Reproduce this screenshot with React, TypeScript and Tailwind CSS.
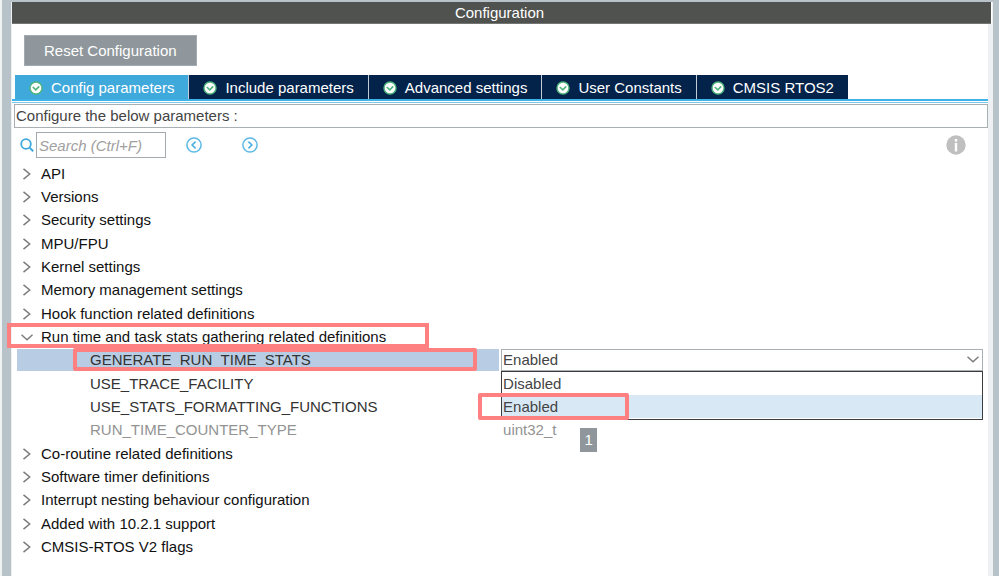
import React, { FC, useState } from "react"

import clsx from "clsx"

type TreeRow = {
    label: string
    value?: string
    child?: boolean
    readOnly?: boolean
    expanded?: boolean
}

const TABS = ["Config parameters", "Include parameters", "Advanced settings", "User Constants", "CMSIS RTOS2"]

const OPTIONS = ["Disabled", "Enabled"]

const ROWS: TreeRow[] = [
    { label: "API" },
    { label: "Versions" },
    { label: "Security settings" },
    { label: "MPU/FPU" },
    { label: "Kernel settings" },
    { label: "Memory management settings" },
    { label: "Hook function related definitions" },
    { label: "Run time and task stats gathering related definitions", expanded: true },
    { label: "GENERATE_RUN_TIME_STATS", child: true },
    { label: "USE_TRACE_FACILITY", child: true },
    { label: "USE_STATS_FORMATTING_FUNCTIONS", child: true },
    { label: "RUN_TIME_COUNTER_TYPE", child: true, readOnly: true, value: "uint32_t" },
    { label: "Co-routine related definitions" },
    { label: "Software timer definitions" },
    { label: "Interrupt nesting behaviour configuration" },
    { label: "Added with 10.2.1 support" },
    { label: "CMSIS-RTOS V2 flags" },
]

const CheckIcon: FC = () => (
    <svg viewBox="0 0 14 14" className="size-3.5 shrink-0" aria-hidden="true">
        <circle cx="7" cy="7" r="6" fill="#fff" stroke="#4fb57c" strokeWidth="1.4" />
        <path d="M3.8 6 6.8 8.8 10.2 5.4" fill="none" stroke="#4fb57c" strokeWidth="1.6" />
    </svg>
)

const CircleArrow: FC<{ path: string }> = ({ path }) => (
    <svg viewBox="0 0 16 16" className="size-4" fill="none" aria-hidden="true">
        <circle cx="8" cy="8" r="7.1" stroke="#5cb9e4" strokeWidth="1.5" />
        <path d={path} stroke="#4fb3e2" strokeWidth="1.7" />
    </svg>
)

const Chevron: FC<{ down?: boolean }> = ({ down }) => (
    <svg viewBox="0 0 12 12" className="size-3 shrink-0" fill="none" stroke="#7d7d7d" strokeWidth="1.5">
        <path d={down ? "M0.5 3.8 6 8.8 11.5 3.8" : "M2.5 0.9 8.7 6 2.5 11.1"} />
    </svg>
)

const StatsSelect: FC = () => {
    const [value, setValue] = useState("Enabled")
    return (
        <div className="relative w-full">
            <select
                aria-label="GENERATE_RUN_TIME_STATS"
                value={value}
                onChange={(e) => setValue(e.target.value)}
                className="block h-[22px] w-full appearance-none border border-[#a9b0b4] bg-white px-px text-[#444]"
            >
                {OPTIONS.map((option) => (
                    <option key={option}>{option}</option>
                ))}
            </select>
            <span className="pointer-events-none absolute top-1 right-1">
                <Chevron down />
            </span>
            <ul
                role="listbox"
                aria-label="Values"
                className="absolute top-full left-0 z-10 w-full border border-[#3c3c40] bg-white pb-px"
            >
                {OPTIONS.map((option) => (
                    <li
                        key={option}
                        role="option"
                        aria-selected={option === value}
                        onClick={() => setValue(option)}
                        className={clsx(
                            "relative flex h-[23px] items-center px-px text-[#444]",
                            option === value && "bg-[#d8e8f5]"
                        )}
                    >
                        {option}
                        {option === "Enabled" && (
                            <span className="pointer-events-none absolute -inset-y-0.5 -left-6 w-[151px] rounded-xs border-4 border-[#ff8080]" />
                        )}
                    </li>
                ))}
            </ul>
        </div>
    )
}

const ParameterRow: FC<{ row: TreeRow }> = ({ row }) => {
    const selected = row.label === "GENERATE_RUN_TIME_STATS"
    return (
        <li className="flex h-[23px] items-center nth-[3n]:h-6">
            <div
                className={clsx(
                    "relative mr-0.5 flex h-[22px] w-1/2 items-center pl-[73px]",
                    row.readOnly ? "text-[#939393]" : "text-[#333]",
                    selected && "bg-[#b8cde4]"
                )}
            >
                {row.label}
                {selected && (
                    <span className="pointer-events-none absolute -top-px right-[22px] bottom-0 left-14 rounded-xs border-4 border-[#ff8080]" />
                )}
            </div>
            <div className="relative w-1/2 text-[#939393]">
                {selected ? <StatsSelect /> : <span className="pl-0.5">{row.value}</span>}
                {row.readOnly && (
                    <span className="absolute top-2 left-[79px] flex h-6 w-[17px] items-center justify-center bg-[#8f979c] text-white">
                        1
                    </span>
                )}
            </div>
        </li>
    )
}

const GroupRow: FC<{ row: TreeRow }> = ({ row }) => (
    <li className="flex h-[23px] items-center nth-[3n]:h-6">
        <button type="button" aria-expanded={!!row.expanded} className="relative flex items-center gap-2 pl-1">
            <Chevron down={row.expanded} />
            {row.label}
            {row.expanded && (
                <span className="pointer-events-none absolute -top-1 -right-[43px] -bottom-px -left-2.5 border-4 border-[#ff8080]" />
            )}
        </button>
    </li>
)

export default function App() {
    const [activeTab, setActiveTab] = useState(TABS[0])
    return (
        <div className="flex min-h-screen border-l-2 border-[#f0f2f4] bg-[#b8c3c9] pt-0.5 pr-1.5 pl-[9px] font-['Liberation_Sans',Arial,sans-serif] text-[15px] leading-5 text-[#111]">
            <main className="flex grow flex-col border-x border-[#eef1f3] bg-white">
                <h1 className="mr-px border-b border-[#747674] bg-[#50524f] pt-px pr-1 text-center text-white">
                    Configuration
                </h1>
                <div className="flex grow flex-col border-r-4 border-[#eef0f3]">
                    <div className="px-3 pt-[11px] pb-[9px]">
                        <button
                            type="button"
                            className="h-[31px] border border-[#a3abb0] bg-[#8f979c] px-[19px] pt-px text-white"
                        >
                            Reset Configuration
                        </button>
                    </div>
                    <div role="tablist" className="flex border-b-2 border-[#3fb2e8] pl-[3px]">
                        {TABS.map((tab) => (
                            <button
                                key={tab}
                                type="button"
                                role="tab"
                                aria-selected={tab === activeTab}
                                onClick={() => setActiveTab(tab)}
                                className={clsx(
                                    "flex h-6 items-center gap-2 border-r border-[#c3ccd6] pt-px pr-3.5 pl-3.5 text-white last:border-r-0",
                                    tab === activeTab ? "bg-[#3fa9dc]" : "bg-[#03234b]"
                                )}
                            >
                                <CheckIcon />
                                {tab}
                            </button>
                        ))}
                    </div>
                    <div className="mt-px h-px bg-[#7cc8ec]" />
                    <p className="mt-px ml-0.5 border border-[#a9b0b4] px-px py-px text-[#444]">
                        Configure the below parameters :
                    </p>
                    <div className="flex items-center pt-1 pr-[22px] pl-2">
                        <svg viewBox="0 0 14 14" className="mr-0.5 size-3.5" fill="none" stroke="#3fa9dc" aria-hidden="true">
                            <circle cx="6" cy="6" r="4.8" strokeWidth="1.8" />
                            <path d="m9.6 9.6 3.6 3.6" strokeWidth="2" />
                        </svg>
                        <input
                            type="search"
                            aria-label="Search"
                            placeholder="Search (Ctrl+F)"
                            className="h-[26px] w-[130px] border border-[#a3abb0] px-0.5 placeholder:text-[#a0a0a0] placeholder:italic"
                        />
                        <button type="button" aria-label="Previous" className="ml-5">
                            <CircleArrow path="M9.6 4.7 6.2 8l3.4 3.3" />
                        </button>
                        <button type="button" aria-label="Next" className="ml-10">
                            <CircleArrow path="M6.4 4.7 9.8 8l-3.4 3.3" />
                        </button>
                        <button type="button" aria-label="Information" className="ml-auto">
                            <svg viewBox="0 0 20 20" className="size-5" aria-hidden="true">
                                <circle cx="10" cy="10" r="9.7" fill="#bfbfbf" />
                                <rect x="8.8" y="4" width="2.4" height="2.6" fill="#fff" />
                                <rect x="8.8" y="8" width="2.4" height="8.5" fill="#fff" />
                            </svg>
                        </button>
                    </div>
                    <ul className="mt-1 mr-[5px] ml-[5px]">
                        {ROWS.map((row) =>
                            row.child ? <ParameterRow key={row.label} row={row} /> : <GroupRow key={row.label} row={row} />
                        )}
                    </ul>
                </div>
            </main>
        </div>
    )
}
